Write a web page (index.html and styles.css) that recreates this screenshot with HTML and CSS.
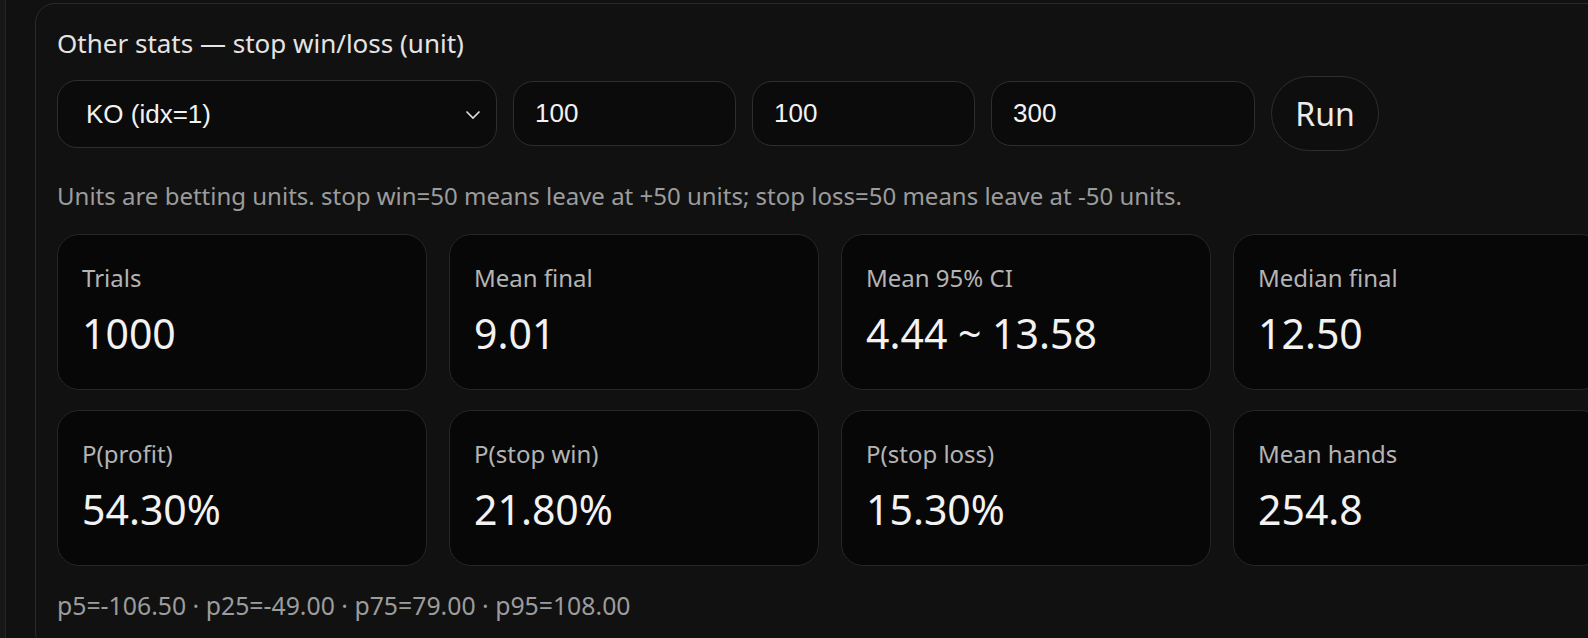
FILE: index.html
```html
<!DOCTYPE html>
<html lang="en">
<head>
    <meta charset="UTF-8">
    <meta name="viewport" content="width=device-width, initial-scale=1.0">
    <title>Other stats</title>
    <link rel="stylesheet" href="styles.css">
</head>
<body>
    <div class="page">
        <!-- Stop win/loss panel -->
        <div class="panel">
            <h2 class="panel-title">Other stats — stop win/loss (unit)</h2>

            <div class="controls">
                <div class="select-wrap">
                    <select class="ctl select">
                        <option>KO (idx=1)</option>
                    </select>
                    <svg class="chevron" width="16" height="10" viewBox="0 0 16 10">
                        <path d="M1.5 1.5 L8 8 L14.5 1.5" fill="none" stroke="#e0e0e0" stroke-width="1.6"/>
                    </svg>
                </div>
                <input class="ctl input" type="text" value="100">
                <input class="ctl input" type="text" value="100">
                <input class="ctl input wide" type="text" value="300">
                <button class="run-btn">Run</button>
            </div>

            <p class="note">Units are betting units. stop win=50 means leave at +50 units; stop loss=50 means leave at -50 units.</p>

            <div class="stats">
                <div class="stat"><div class="stat-label">Trials</div><div class="stat-value">1000</div></div>
                <div class="stat"><div class="stat-label">Mean final</div><div class="stat-value">9.01</div></div>
                <div class="stat"><div class="stat-label">Mean 95% CI</div><div class="stat-value">4.44 ~ 13.58</div></div>
                <div class="stat"><div class="stat-label">Median final</div><div class="stat-value">12.50</div></div>
                <div class="stat"><div class="stat-label">P(profit)</div><div class="stat-value">54.30%</div></div>
                <div class="stat"><div class="stat-label">P(stop win)</div><div class="stat-value">21.80%</div></div>
                <div class="stat"><div class="stat-label">P(stop loss)</div><div class="stat-value">15.30%</div></div>
                <div class="stat"><div class="stat-label">Mean hands</div><div class="stat-value">254.8</div></div>
            </div>

            <p class="note footer">p5=-106.50 · p25=-49.00 · p75=79.00 · p95=108.00</p>
        </div>
    </div>
</body>
</html>
```

FILE: styles.css
```css
html, body {
    overflow: hidden;
}

body {
    margin: 0;
    background-color: #171717;
    font-family: "Noto Sans", "Open Sans", sans-serif;
    color: #e6e6e6;
}

.page {
    margin-left: 5px;
    border-left: 1px solid #252525;
    background-color: #111111;
    min-height: 638px;
    padding: 3px 0 0 29px;
}

.panel {
    width: 1546px;
    border: 1px solid #2a2a2a;
    border-radius: 20px;
    padding: 22px 21px 30px;
    background-color: #111111;
}

.panel-title {
    margin: 0;
    font-size: 26px;
    font-weight: 400;
    line-height: 34px;
    color: #e4e4e4;
}

.controls {
    display: flex;
    align-items: center;
    gap: 16px;
    margin-top: 16px;
    height: 75px;
}

.ctl {
    box-sizing: border-box;
    background-color: #0b0b0b;
    border: 1.5px solid #2e2e2e;
    border-radius: 20px;
    color: #f2f2f2;
    font-family: "Liberation Sans", Arial, sans-serif;
    font-size: 26px;
    outline: none;
}

.select-wrap {
    position: relative;
}

.select {
    -webkit-appearance: none;
    appearance: none;
    width: 440px;
    height: 68px;
    padding: 0 50px 0 28px;
}

.chevron {
    position: absolute;
    right: 16px;
    top: 30px;
}

.input {
    width: 223px;
    height: 65px;
    padding: 0 21px;
}

.input.wide {
    width: 264px;
}

.run-btn {
    box-sizing: border-box;
    width: 108px;
    height: 75px;
    border: 1.5px solid #2e2e2e;
    border-radius: 38px;
    background-color: #0e0e0e;
    color: #ececec;
    font-family: "Noto Sans", "Open Sans", sans-serif;
    font-size: 32px;
    cursor: pointer;
}

.note {
    margin: 29px 0 0;
    font-size: 24px;
    line-height: 32px;
    color: #9c9c9c;
}

.stats {
    display: grid;
    grid-template-columns: repeat(4, 370px);
    gap: 20px 22px;
    margin-top: 22px;
}

.stat {
    box-sizing: border-box;
    height: 156px;
    padding: 27px 24px 0;
    background-color: #070707;
    border: 1.5px solid #262626;
    border-radius: 22px;
}

.stat-label {
    font-size: 24px;
    line-height: 32px;
    color: #b4b4b4;
}

.stat-value {
    margin-top: 13px;
    font-size: 41px;
    line-height: 52px;
    color: #f2f2f2;
}

.footer {
    margin-top: 23px;
    font-size: 24.8px;
}
```
